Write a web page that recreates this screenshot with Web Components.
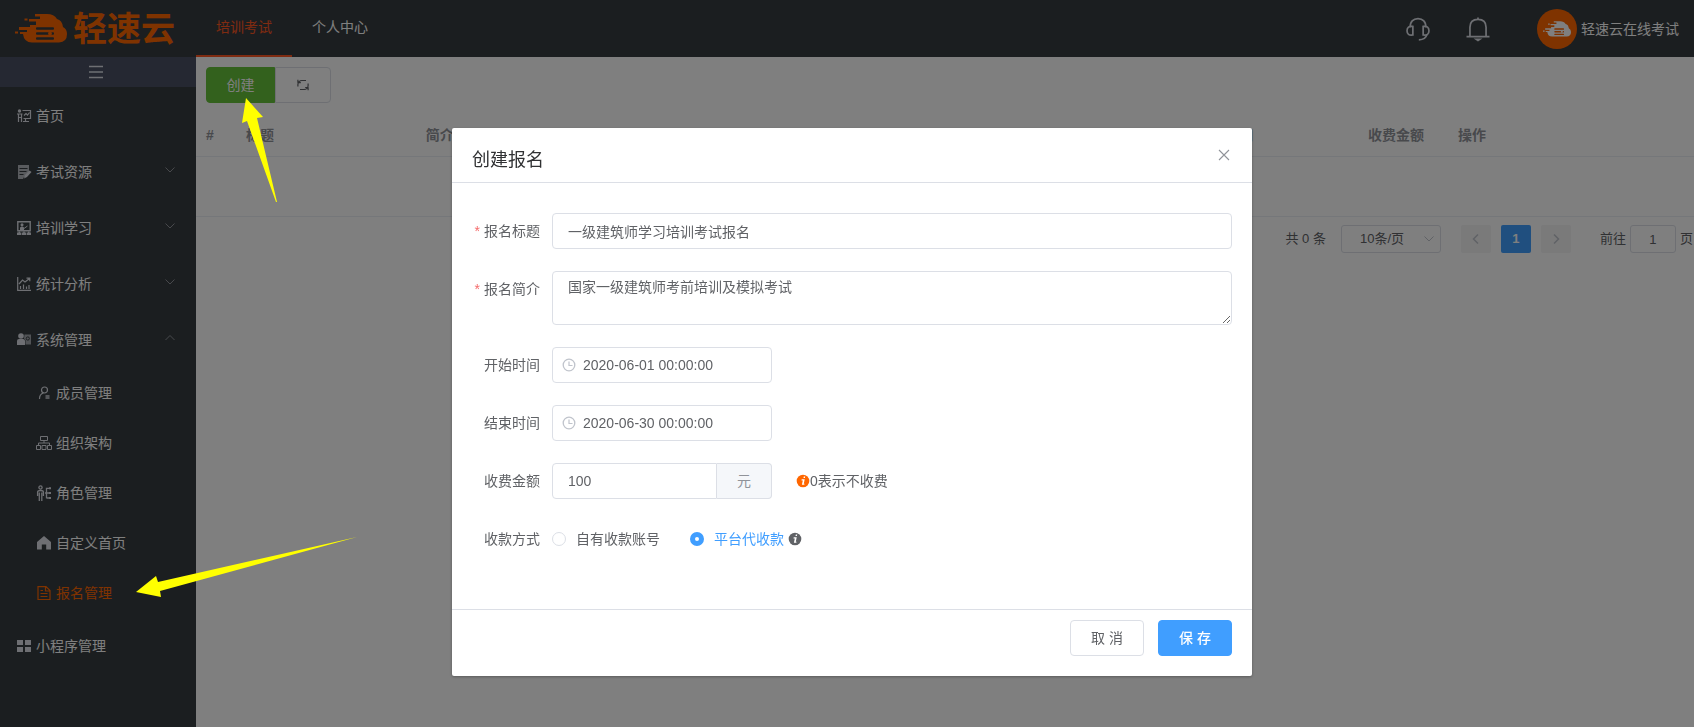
<!DOCTYPE html>
<html lang="zh-CN">
<head>
<meta charset="utf-8">
<title>轻速云在线考试</title>
<style>
html,body{margin:0;height:100%}
body{font:14px/20px "Liberation Sans","Noto Sans CJK SC",sans-serif;color:#606266;background:#fff;overflow:hidden}
</style>
</head>
<body>
<exam-app></exam-app>
<script>
const ICONS = {
  home:'<g stroke="currentColor" fill="none"><path d="M5.500 1.500H13.500V9.500H6.500M8.500 9.500v3M6 12.500h6M7 6.500l2-2 1.500 1.500 2-2.500" stroke-width="1.200"/><path d="M0 5h5.500M1.500 5v8M4.500 5v8M1.500 8.500h3" stroke-width="1.200"/></g><circle cx="2.500" cy="2" r="1.700"/>',
  exam:'<path d="M1 0h11v7l-4 5H7l-1 2H1z" opacity=".75"/><path d="M2.500 3.500h8M2.500 6.500h7M2.500 9.500h4" stroke="#373d41"/><path d="M7 13.500l1-3.500 4.500-4.500L14.500 7l-4.500 5z"/>',
  train:'<path d="M.8.7h12.400v9H.8z" fill="none" stroke="currentColor" stroke-width="1.400"/><circle cx="5" cy="3.700" r="1.500"/><path d="M3 9V6.500l2-1.300 2 1.300V9zM0 14v-2.500h1.500V10.500h1.500v1H4.300V14zM4.900 14v-2.500h1.300v-1h1.600v1h1.300V14zM9.700 14v-2.500H11v-1h1.500v1H14V14z"/><path d="M7 7.500l3.500-2.500" stroke="currentColor"/>',
  chart:'<path d="M.7 0v13.300H14M3.500 12V9M6.500 12V7.500M9.500 12V9.500M12 12V8M2 7l3.500-4 2.500 2L12.500 1.500M9.500 1.200h3.300v3" fill="none" stroke="currentColor" stroke-width="1.200"/>',
  system:'<circle cx="4" cy="3" r="2.800"/><path d="M0 12V8q0-2 2-2h4q2 0 2 2v4z"/><path d="M7.500 1.500H14v10H8.500V7L7 5.500z" opacity=".65"/><circle cx="10.800" cy="5.500" r="1.600" fill="none" stroke="#373d41"/>',
  member:'<circle cx="7.500" cy="4" r="3" fill="none" stroke="currentColor" stroke-width="1.200"/><path d="M2.500 13q0-5 4-6" fill="none" stroke="currentColor" stroke-width="1.200"/><path d="M8.500 9h4v4h-4z" opacity=".7"/>',
  org:'<path d="M3.500.5h7v4h-7zM7 4.500V7M1.500 9.500V7h11v2.500M-.5 9.500H3.500v4h-4zM5 9.500h4v4H5zM10.500 9.500h4v4h-4z" fill="none" stroke="currentColor"/>',
  role:'<g fill="none" stroke="currentColor" stroke-width="1.300"><circle cx="3.500" cy="1.500" r="1.600"/><path d="M.6 10V6q0-1.500 2.900-1.500T6.400 6v4M2.300 6.500V15M4.800 6.500V15M9.500 1.800v10.500M9.500 2.300h3M8 7h5M9.500 12h3"/></g><path d="M12 1.300h2v2h-2zM12 6h2v2h-2zM12 11h2v2h-2z"/>',
  house:'<path d="M7 0l7 6v7.500H9.200V8.500H4.800v5H0V6z"/>',
  doc:'<path d="M1 .6h8L13 4.500v9H1zM8.500.6V5H13M3.500 7.500h7M3.500 10.500h7M3.500 4.500h2.500" fill="none" stroke="currentColor" stroke-width="1.200"/>',
  grid:'<path d="M0 1h6v5H0zM8 1h6v5H8zM0 8h6v5H0zM8 8h6v5H8z"/>',
  menu:'<path d="M0 1.500h14M0 7h14M0 12.500h14" stroke="currentColor" stroke-width="1.600"/>',
  down:'<path d="M2.500 4.500L7 9l4.500-4.500" fill="none" stroke="currentColor"/>',
  up:'<path d="M2.500 9L7 4.500 11.500 9" fill="none" stroke="currentColor"/>',
  prev:'<path d="M9 2.500L4.500 7 9 11.500" fill="none" stroke="currentColor" stroke-width="1.500"/>',
  next:'<path d="M5 2.500L9.500 7 5 11.500" fill="none" stroke="currentColor" stroke-width="1.500"/>',
  close:'<path d="M2 2l10 10M12 2L2 12" stroke="currentColor" stroke-width="1.100"/>',
  clock:'<circle cx="7" cy="7" r="5.800" fill="none" stroke="currentColor" stroke-width="1.300"/><path d="M7 3.500V7.500h3.500" fill="none" stroke="currentColor" stroke-width="1.200"/>',
  refresh:'<path d="M1.900 8.500V6.500a4 4 0 0 1 4-4H10M12.100 5.500v2a4 4 0 0 1-4 4H4M1.900 4.800V1.800M1.900 4.600H4.800M12.100 9.200v3M12.100 9.500H9.200" fill="none" stroke="currentColor" stroke-width="1.200"/>',
  info:'<circle cx="7" cy="7" r="6.300"/><path d="M7.800 2.600h1.400l-.3 1.500H7.500zM5.700 5.300h3L7.800 9.800h.8l-.3 1H5.900l.9-4.400H5.500z" fill="#fff"/>',
  headset:'<g fill="none" stroke="currentColor" stroke-width="1"><path d="M2.500 6C2.200 2.800 4.300.9 7 .9s4.800 1.900 4.500 5.100M12.300 10Q11.500 13.200 7.500 13.300"/><path d="M4 5.500v5Q.6 11 .6 8T4 5.500zM10 5.500v5q3.400.5 3.400-2.500T10 5.500z"/></g>',
  bell:'<path d="M7 .3v1M2.300 11V6q0-4.600 4.700-4.600T11.700 6v5M.3 11.400h13.400M6 13h2l-1 .7z" fill="none" stroke="currentColor" stroke-width="1"/>'
};
const CLOUD = '<path d="M20 0H32Q39 0 42 5Q47 6 48 13Q52 15 52 20Q52 28 44 28.500H17Q9 28.500 8 20H5V18H12V16H4V13H15V11H21V7.500H14V5H25V2.500H20z"/><path d="M0 17.500h3v2H0zM9.500 4.500h3v2h-3z"/>';
const sheet = ':host{display:block}*,*::before,*::after{box-sizing:border-box}button,input,select,textarea{font:inherit;color:inherit;margin:0}';
function define(name, css, html){
  customElements.define(name, class extends HTMLElement{
    constructor(){
      super();
      const t=document.createElement('template');
      t.innerHTML='<style>'+sheet+css+'</style>'+(typeof html==='function'?html(this):html);
      this.attachShadow({mode:'open'}).append(t.content.cloneNode(true));
    }
  });
}

define('ui-icon',':host{display:inline-flex;width:14px;height:14px;flex:none}svg{width:100%;height:100%;overflow:visible}',
  el=>`<svg viewBox="0 0 14 14" fill="currentColor" aria-hidden="true">${ICONS[el.getAttribute('name')]}</svg>`);

define('brand-cloud',':host{width:52px;height:29px;flex:none;color:#ff6600;--line:#373d41}svg{display:block;width:100%;height:100%}',
  `<svg viewBox="0 0 52 29" fill="currentColor" aria-hidden="true">${CLOUD}<g fill="var(--line)"><rect x="21" y="13.200" width="18" height="2.600" rx="1"/><rect x="21" y="18.200" width="18" height="2.600" rx="1"/><rect x="21" y="23.200" width="18" height="2.600" rx="1"/></g><circle cx="35" cy="19.500" r="1.900"/></svg>`);

define('app-header',`:host{height:57px;background:#373d41;color:#fff;display:flex;justify-content:space-between}
.left,.right,nav{display:flex}
.logo{width:196px;padding-left:15px;display:flex;align-items:center;gap:6px;color:#ff6600;font-size:34px;line-height:40px;font-weight:700;text-decoration:none}
nav a{height:57px;line-height:54px;padding:0 20px;color:#fff;text-decoration:none;border-bottom:2px solid transparent}
nav a.on{color:#ff5722;border-color:#ff5722}
.right{align-items:center;padding-right:15px}
.tool{border:0;background:none;padding:0;color:#dcdfe6;width:24px;height:24px;margin-right:36px}
.tool ui-icon{width:24px;height:24px}
.face{width:40px;height:40px;border-radius:50%;background:#ff6600;display:grid;place-items:center;margin:0 4px 0 11px}
.face brand-cloud{width:28px;height:18px;color:#fff;--line:#ff6600}`,
`<div class="left"><a class="logo" href="#"><brand-cloud></brand-cloud>轻速云</a>
<nav><a class="on" href="#">培训考试</a><a href="#">个人中心</a></nav></div>
<div class="right"><button class="tool" aria-label="客服"><ui-icon name="headset"></ui-icon></button><button class="tool" aria-label="通知"><ui-icon name="bell"></ui-icon></button><span class="face"><brand-cloud></brand-cloud></span><span>轻速云在线考试</span></div>`);

define('menu-item',`a{display:flex;align-items:center;height:56px;padding:0 19px 0 17px;color:#fff;text-decoration:none}
ui-icon{margin-right:5px;color:#dcdfe6}.arrow{margin:-4px 0 0 auto;color:#909399}
:host([sub]) a{height:50px;padding-left:37px}
:host([active]) a,:host([active]) ui-icon{color:#ff6600}`,
el=>`<a href="#"><ui-icon name="${el.getAttribute('icon')}"></ui-icon><slot></slot>${el.hasAttribute('arrow')?`<ui-icon class="arrow" name="${el.getAttribute('arrow')}"></ui-icon>`:''}</a>`);

define('app-sidebar',`:host{width:196px;background:#373d41;flex:none}
button{display:flex;width:100%;height:30px;margin-bottom:1px;padding:0 4px 0 0;border:0;background:#4a5064;color:#dcdfe6;align-items:center;justify-content:center}`,
`<button aria-label="折叠菜单"><ui-icon name="menu"></ui-icon></button>
<nav><menu-item icon="home">首页</menu-item><menu-item icon="exam" arrow="down">考试资源</menu-item><menu-item icon="train" arrow="down">培训学习</menu-item><menu-item icon="chart" arrow="down">统计分析</menu-item><menu-item icon="system" arrow="up">系统管理</menu-item>
<menu-item sub icon="member">成员管理</menu-item><menu-item sub icon="org">组织架构</menu-item><menu-item sub icon="role">角色管理</menu-item><menu-item sub icon="house">自定义首页</menu-item><menu-item sub active icon="doc">报名管理</menu-item><menu-item icon="grid">小程序管理</menu-item></nav>`);

define('page-bar',`:host{display:flex;justify-content:flex-end;align-items:center;font-size:13px;height:28px;margin-top:8px}
.size{position:relative;width:100px;margin:0 20px 0 15px}
select{appearance:none;width:100px;height:28px;padding:0 18px;border:1px solid #dcdfe6;border-radius:3px;background:#fff;display:block}
.size ui-icon{position:absolute;right:5px;top:7px;color:#c0c4cc}
button{width:30px;height:28px;padding:0;border:0;border-radius:2px;background:#f4f4f5;color:#c0c4cc;margin-right:10px;display:grid;place-items:center}
button.on{background:#409eff;color:#fff;font-weight:700}
label{display:flex;align-items:center;gap:4px;margin-left:19px}
input{width:46px;height:28px;border:1px solid #dcdfe6;border-radius:3px;text-align:center;padding:0;background:#fff}`,
`<span>共 0 条</span><span class="size"><select aria-label="每页条数"><option>10条/页</option></select><ui-icon name="down"></ui-icon></span>
<button aria-label="上一页"><ui-icon name="prev"></ui-icon></button><button class="on">1</button><button aria-label="下一页"><ui-icon name="next"></ui-icon></button>
<label>前往<input value="1"><span>页</span></label>`);

define('app-list',`:host{flex:1;min-width:0;background:#fff}
.bar{display:flex;padding:10px 10px 0}
button{height:36px;border:1px solid #dcdfe6;background:#fff;border-radius:0 4px 4px 0;width:56px;padding:0;display:grid;place-items:center}
.add{width:69px;background:#67c23a;border-color:#67c23a;color:#fff;border-radius:4px 0 0 4px}
table{width:100%;border-collapse:separate;border-spacing:0;table-layout:fixed;margin-top:10px}
th{height:44px;padding:0 10px;text-align:left;color:#909399;border-bottom:1px solid #ebeef5}
td{height:60px;padding:0;border-bottom:1px solid #ebeef5}
page-bar{padding-right:1px}`,
`<div class="bar"><button class="add">创建</button><button aria-label="刷新"><ui-icon name="refresh"></ui-icon></button></div>
<table><colgroup><col style="width:40px"><col style="width:12%"><col><col style="width:12%"><col style="width:171px"><col style="width:90px"><col style="width:246px"></colgroup>
<thead><tr><th>#</th><th>标题</th><th>简介</th><th>开始时间</th><th>结束时间</th><th>收费金额</th><th>操作</th></tr></thead><tbody><tr><td colspan="7"></td></tr></tbody></table>
<page-bar></page-bar>`);

define('form-row',`:host{display:flex;min-height:36px;margin-bottom:22px}
.label{width:80px;padding-right:12px;line-height:36px;text-align:right;flex:none}
:host([required]) .label::before{content:"*";color:#f56c6c;margin-right:4px}
.field{flex:1;display:flex;align-items:center;min-width:0}`,
el=>`<span class="label">${el.getAttribute('label')}</span><div class="field"><slot></slot></div>`);

define('text-field',`:host{width:100%}:host([kind=date]),:host([unit]){width:220px}
.box{position:relative;display:flex}
input,textarea{display:block;flex:1;width:100%;min-width:0;height:36px;border:1px solid #dcdfe6;border-radius:4px;padding:0 15px;background:#fff;outline:0}
textarea{height:54px;padding:5px 15px;line-height:21px;resize:vertical}
.unit{width:55px;border:1px solid #dcdfe6;border-left:0;border-radius:0 4px 4px 0;background:#f5f7fa;color:#909399;display:grid;place-items:center}
:host([unit]) input{border-radius:4px 0 0 4px}
:host([kind=date]) input{padding-left:30px}
ui-icon{position:absolute;left:10px;top:11px;color:#c0c4cc}`,
el=>{const a=n=>el.getAttribute(n),v=a('value'),l=a('label');
return `<div class="box">${a('kind')==='area'?`<textarea aria-label="${l}">${v}</textarea>`:`<input aria-label="${l}" value="${v}">`}${a('kind')==='date'?'<ui-icon name="clock"></ui-icon>':''}${a('unit')?`<span class="unit">${a('unit')}</span>`:''}</div>`});

define('pay-choice',`:host{display:flex;align-items:center}label{display:flex;align-items:center;gap:10px;margin-right:30px}
input{appearance:none;width:14px;height:14px;border:1px solid #dcdfe6;border-radius:50%;background:#fff}
input:checked{border:5px solid #409eff}label.on{color:#409eff;margin-right:4px}`,
`<label><input type="radio" name="pay">自有收款账号</label><label class="on"><input type="radio" name="pay" checked>平台代收款</label><ui-icon name="info"></ui-icon>`);

define('signup-dialog',`:host{position:fixed;inset:0;background:rgba(0,0,0,.5);padding-left:10px}
section{width:800px;max-width:100%;margin:128px auto 0;background:#fff;border-radius:2px;box-shadow:0 1px 3px rgba(0,0,0,.3)}
header{height:55px;padding:0 20px;display:flex;align-items:center;justify-content:space-between;border-bottom:1px solid #dcdfe6}
h2{margin:10px 0 0;font-size:18px;line-height:24px;font-weight:400;color:#303133}
.x{border:0;background:none;padding:0;width:16px;height:16px;color:#909399;display:grid;place-items:center}
form{padding:30px 20px}
.hint{display:flex;align-items:center;margin-left:24px;white-space:nowrap}.hint ui-icon{color:#ff6600}
footer{display:flex;justify-content:flex-end;gap:14px;border-top:1px solid #dcdfe6;padding:10px 20px 20px}
footer button{width:74px;height:36px;border:1px solid #dcdfe6;border-radius:4px;background:#fff;padding:0}
footer .ok{background:#409eff;border-color:#409eff;color:#fff;font-weight:500}`,
`<section role="dialog" aria-label="创建报名"><header><h2>创建报名</h2><button class="x" aria-label="关闭"><ui-icon name="close"></ui-icon></button></header>
<form><form-row required label="报名标题"><text-field label="报名标题" value="一级建筑师学习培训考试报名"></text-field></form-row>
<form-row required label="报名简介"><text-field kind="area" label="报名简介" value="国家一级建筑师考前培训及模拟考试"></text-field></form-row>
<form-row label="开始时间"><text-field kind="date" label="开始时间" value="2020-06-01 00:00:00"></text-field></form-row>
<form-row label="结束时间"><text-field kind="date" label="结束时间" value="2020-06-30 00:00:00"></text-field></form-row>
<form-row label="收费金额"><text-field unit="元" label="收费金额" value="100"></text-field><span class="hint"><ui-icon name="info"></ui-icon>0表示不收费</span></form-row>
<form-row label="收款方式"><pay-choice></pay-choice></form-row></form>
<footer><button>取 消</button><button class="ok">保 存</button></footer></section>`);

define('guide-arrows',':host{position:fixed;left:0;top:0;pointer-events:none}svg{display:block}',
`<svg width="400" height="650" fill="#ff0" aria-hidden="true"><path d="M246 98l17 19-6 1 20 84-1 0-29-81-5 2z"/><path d="M136 592l20-16 2 6 199-45-197 54 1 6z"/></svg>`);

define('exam-app',`:host{min-height:100vh;display:flex;flex-direction:column}.body{flex:1;display:flex}`,
`<app-header></app-header><div class="body"><app-sidebar></app-sidebar><app-list></app-list></div><signup-dialog></signup-dialog><guide-arrows></guide-arrows>`);
</script>
</body>
</html>
